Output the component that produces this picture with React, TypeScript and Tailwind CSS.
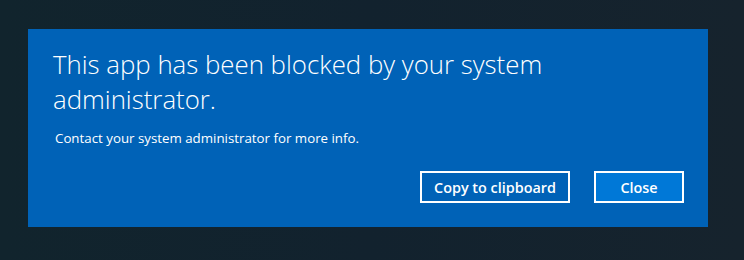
export default function App() {
  return (
    <div className="h-[260px] w-full overflow-hidden bg-gradient-to-r from-[#11242d] via-[#12222e] to-[#16232d] pl-[28px] pt-[29px] font-['Open_Sans',sans-serif]">
      <div className="flex h-[198px] w-[680px] flex-col bg-[#0062b7] pb-[24px] pl-[25px] pr-[24px] pt-[18px] text-white">
        <h1 className="max-w-[540px] text-[25.8px] font-light leading-[35px]">
          This app has been blocked by your system administrator.
        </h1>
        <p className="mt-[11px] pl-[2px] text-[13.3px] leading-[20px]">
          Contact your system administrator for more info.
        </p>
        <div className="mt-auto flex justify-end gap-[24px]">
          <button className="h-[32px] w-[150px] border-2 border-white pt-[1px] text-[14.4px] font-semibold">
            Copy to clipboard
          </button>
          <button className="h-[32px] w-[90px] border-2 border-white bg-[#0078d7] pt-[1px] text-[14.4px] font-semibold">
            Close
          </button>
        </div>
      </div>
    </div>
  );
}
